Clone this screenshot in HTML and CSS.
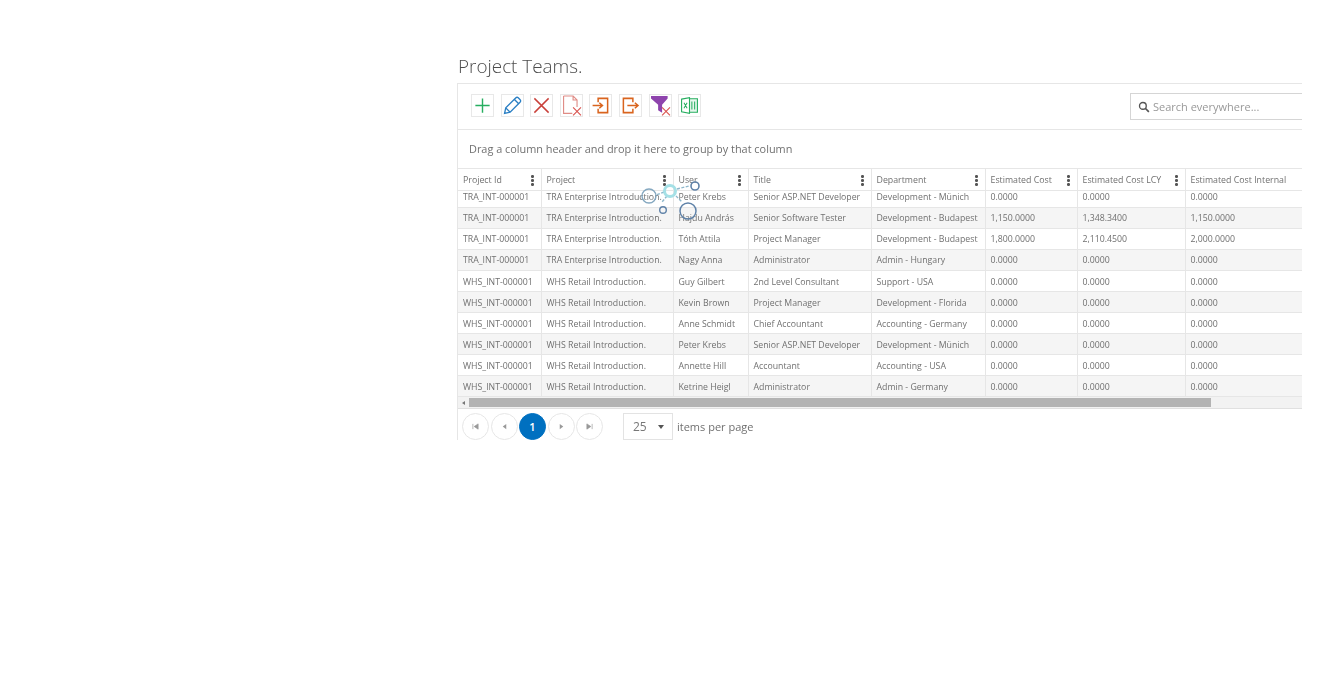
FILE: index.html
```html
<!DOCTYPE html>
<html lang="en">
<head>
<meta charset="utf-8">
<title>Project Teams</title>
<link rel="stylesheet" href="styles.css">
</head>
<body>
<main class="page">
  <h1 class="title">Project Teams.</h1>
  <section class="panel">
    <div class="toolbar">
      <div class="tools">
        <button class="tool"><svg viewBox="0 0 24 24"><path d="M12 3v18M3 12h18" stroke="#27ae60" stroke-width="1.800" fill="none"/></svg></button>
        <button class="tool"><svg viewBox="0 0 24 24"><path d="M2 22l1.500-7L16 2.500c1-1 2.400-1 3.200-.2l2.500 2.500c.8.8.8 2.200-.2 3.200L9 20.500 2 22zM14.500 4.500l5 5M3.500 15L9 20.500" stroke="#2a7fc4" stroke-width="1.700" fill="none"/></svg></button>
        <button class="tool"><svg viewBox="0 0 24 24"><path d="M3 3l18 18M21 3L3 21" stroke="#c9403a" stroke-width="1.800" fill="none"/></svg></button>
        <button class="tool"><svg viewBox="0 0 24 24"><path d="M2 0h12l5 5v9M14 0v5h5M2 0v22h11" stroke="#e08b85" stroke-width="1.400" fill="none"/><path d="M14 14.500l10 10M24 14.500l-10 10" stroke="#d9534f" stroke-width="1.400" fill="none"/></svg></button>
        <button class="tool"><svg viewBox="0 0 24 24"><path d="M9 8V3h12v18H9v-5M2 12h12M10.500 8.500L14.500 12l-4 3.500" stroke="#d9641e" stroke-width="1.900" fill="none"/></svg></button>
        <button class="tool"><svg viewBox="0 0 24 24"><path d="M15 8V3H3v18h12v-5M8 12h13M17.500 8.500L21.500 12l-4 3.500" stroke="#d9641e" stroke-width="1.900" fill="none"/></svg></button>
        <button class="tool"><svg viewBox="0 0 24 24"><path d="M0 0h21v3l-7 8v10l-5-3v-7L0 3z" fill="#8e44ad"/><path d="M14 14.500l10 10M24 14.500l-10 10" stroke="#d9534f" stroke-width="1.400" fill="none"/></svg></button>
        <button class="tool"><svg viewBox="0 0 24 24"><path d="M9 3.500h13v17H9" stroke="#27ae60" stroke-width="1.400" fill="#e8f7ee"/><path d="M2 4l10-2v20L2 20z" stroke="#27ae60" stroke-width="1.400" fill="#fff"/><path d="M5 8.500l4 7M9 8.500l-4 7M15 7v10M18.500 7v10" stroke="#27ae60" stroke-width="1.300" fill="none"/></svg></button>
      </div>
      <label class="search">
        <svg viewBox="0 0 16 16"><circle cx="6.500" cy="6.500" r="4.500" stroke="#555" stroke-width="1.800" fill="none"/><path d="M10 10l4.500 4.500" stroke="#555" stroke-width="2.200"/></svg>
        <span>Search everywhere...</span>
      </label>
    </div>
    <div class="group-bar">Drag a column header and drop it here to group by that column</div>
    <div class="grid-wrap">
      <table class="grid">
        <colgroup>
          <col class="c1"><col class="c2"><col class="c3"><col class="c4"><col class="c5"><col class="c6"><col class="c7"><col class="c8">
        </colgroup>
        <thead>
          <tr>
            <th><span class="hd">Project Id<i class="dots"></i></span></th>
            <th><span class="hd">Project<i class="dots"></i></span></th>
            <th><span class="hd">User<i class="dots"></i></span></th>
            <th><span class="hd">Title<i class="dots"></i></span></th>
            <th><span class="hd">Department<i class="dots"></i></span></th>
            <th><span class="hd">Estimated Cost<i class="dots"></i></span></th>
            <th><span class="hd">Estimated Cost LCY<i class="dots"></i></span></th>
            <th><span class="hd">Estimated Cost Internal</span></th>
          </tr>
        </thead>
        <tbody>
          <tr class="first"><td>TRA_INT-000001</td><td>TRA Enterprise Introduction.</td><td>Peter Krebs</td><td>Senior ASP.NET Developer</td><td>Development - Münich</td><td>0.0000</td><td>0.0000</td><td>0.0000</td></tr>
          <tr class="alt"><td>TRA_INT-000001</td><td>TRA Enterprise Introduction.</td><td>Hajdu András</td><td>Senior Software Tester</td><td>Development - Budapest</td><td>1,150.0000</td><td>1,348.3400</td><td>1,150.0000</td></tr>
          <tr><td>TRA_INT-000001</td><td>TRA Enterprise Introduction.</td><td>Tóth Attila</td><td>Project Manager</td><td>Development - Budapest</td><td>1,800.0000</td><td>2,110.4500</td><td>2,000.0000</td></tr>
          <tr class="alt"><td>TRA_INT-000001</td><td>TRA Enterprise Introduction.</td><td>Nagy Anna</td><td>Administrator</td><td>Admin - Hungary</td><td>0.0000</td><td>0.0000</td><td>0.0000</td></tr>
          <tr><td>WHS_INT-000001</td><td>WHS Retail Introduction.</td><td>Guy Gilbert</td><td>2nd Level Consultant</td><td>Support - USA</td><td>0.0000</td><td>0.0000</td><td>0.0000</td></tr>
          <tr class="alt"><td>WHS_INT-000001</td><td>WHS Retail Introduction.</td><td>Kevin Brown</td><td>Project Manager</td><td>Development - Florida</td><td>0.0000</td><td>0.0000</td><td>0.0000</td></tr>
          <tr><td>WHS_INT-000001</td><td>WHS Retail Introduction.</td><td>Anne Schmidt</td><td>Chief Accountant</td><td>Accounting - Germany</td><td>0.0000</td><td>0.0000</td><td>0.0000</td></tr>
          <tr class="alt"><td>WHS_INT-000001</td><td>WHS Retail Introduction.</td><td>Peter Krebs</td><td>Senior ASP.NET Developer</td><td>Development - Münich</td><td>0.0000</td><td>0.0000</td><td>0.0000</td></tr>
          <tr><td>WHS_INT-000001</td><td>WHS Retail Introduction.</td><td>Annette Hill</td><td>Accountant</td><td>Accounting - USA</td><td>0.0000</td><td>0.0000</td><td>0.0000</td></tr>
          <tr class="alt"><td>WHS_INT-000001</td><td>WHS Retail Introduction.</td><td>Ketrine Heigl</td><td>Administrator</td><td>Admin - Germany</td><td>0.0000</td><td>0.0000</td><td>0.0000</td></tr>
        </tbody>
      </table>
      <svg class="spinner" viewBox="0 0 70 40">
        <g fill="none">
          <path d="M37 8l12-3M24 11l-8 3M27 15l-5 6M36 15l6 6" stroke="#8fb8cc" stroke-width="1.400" stroke-dasharray="3 1.500"/>
          <circle cx="30" cy="10" r="5.500" stroke="#a5e0e6" stroke-width="3"/>
          <circle cx="55" cy="5" r="4" stroke="#5f82a8" stroke-width="1.600"/>
          <circle cx="9" cy="15" r="7" stroke="#85a8c0" stroke-width="1.400"/>
          <circle cx="23" cy="29" r="3.300" stroke="#5f82a8" stroke-width="1.400"/>
          <circle cx="48" cy="30" r="8" stroke="#5f82a8" stroke-width="1.500"/>
        </g>
      </svg>
    </div>
    <div class="scrollbar">
      <span class="arrow"></span>
      <span class="thumb"></span>
    </div>
    <div class="pager">
      <div class="pages">
        <button class="pg"><svg viewBox="0 0 8 8"><path d="M1 1v6M7 1v6L2.500 4z" fill="#999" stroke="#999" stroke-width=".8"/></svg></button>
        <button class="pg"><svg viewBox="0 0 8 8"><path d="M6 1v6L2 4z" fill="#999"/></svg></button>
        <button class="pg current">1</button>
        <button class="pg"><svg viewBox="0 0 8 8"><path d="M2 1v6l4-3z" fill="#999"/></svg></button>
        <button class="pg"><svg viewBox="0 0 8 8"><path d="M7 1v6M1 1v6l4.500-3z" fill="#999" stroke="#999" stroke-width=".8"/></svg></button>
      </div>
      <div class="size">25<i class="caret"></i></div>
      <span class="per">items per page</span>
    </div>
  </section>
</main>
</body>
</html>
```
FILE: styles.css
```css
* { box-sizing: border-box; }
html, body { margin: 0; background: #fff; }
body { font-family: "Open Sans", "Noto Sans", sans-serif; color: #666; }
.page { width: 1302px; padding: 52px 0 0 457px; overflow: hidden; filter: blur(0.35px); }
.title { margin: 0 0 3px; padding-left: 1px; font-size: 18.900px; line-height: 28px; font-weight: 300; color: #4d4d4d; }
.panel { border-top: 1px solid #e6e6e6; border-left: 1px solid #e6e6e6; height: 357px; overflow: hidden; }
.toolbar { height: 46px; border-bottom: 1px solid #e6e6e6; display: flex; align-items: center; justify-content: space-between; padding: 0 0 2px 13px; }
.tools { display: flex; gap: 6.600px; }
.tool { width: 23px; height: 23px; padding: 1px; background: #fff; border: 1px solid #e8e8e8; display: flex; overflow: visible; }
.tool svg { width: 100%; height: 100%; display: block; overflow: visible; }
.search { width: 172px; height: 27px; margin-top: 2px; border: 1px solid #d5d5d5; border-right: 0; display: flex; align-items: center; gap: 3px; padding-left: 7px; font-size: 11px; color: #999; }
.search svg { width: 12px; height: 12px; }
.group-bar { height: 39px; border-bottom: 1px solid #e6e6e6; padding: 0 0 2px 11px; display: flex; align-items: center; font-size: 10.900px; color: #707070; }
.grid-wrap { position: relative; }
.grid { border-collapse: collapse; table-layout: fixed; width: 844px; font-size: 8.750px; }
.c1 { width: 83px; } .c2 { width: 132px; } .c3 { width: 75px; } .c4 { width: 123px; }
.c5 { width: 114px; } .c6 { width: 92px; } .c7 { width: 108px; } .c8 { width: 117px; }
th { height: 21px; padding: 2px 5px 0; font-weight: 400; text-align: left; color: #707070; border-right: 1px solid #e6e6e6; border-bottom: 1px solid #e6e6e6; font-size: 8.800px; }
th:last-child, td:last-child { border-right: 0; }
.hd { display: flex; align-items: center; justify-content: space-between; white-space: nowrap; }
.dots { width: 2.500px; height: 2.500px; margin-right: 2px; border-radius: 50%; background: #555; box-shadow: 0 -4px 0 #555, 0 4px 0 #555; }
td { height: 21.100px; padding: 0 5px; white-space: nowrap; color: #707070; border-right: 1px solid #e6e6e6; border-bottom: 1px solid #e6e6e6; overflow: hidden; }
tbody tr:nth-child(n+5) td { padding-top: 2px; }
.first td { height: 17px; padding-bottom: 4px; line-height: 10px; }
.alt td { background: #f5f5f5; }
.spinner { position: absolute; left: 182px; top: 12px; width: 70px; height: 40px; }
.scrollbar { height: 12px; background: #f2f2f2; border-bottom: 1px solid #e0e0e0; display: flex; align-items: center; }
.arrow { width: 0; height: 0; margin: 0 4px; border: 2px solid transparent; border-right: 3px solid #777; border-left: 0; }
.thumb { width: 742px; height: 9px; background: #b3b3b3; }
.pager { display: flex; align-items: flex-start; height: 36px; padding: 4px 0 0 4px; }
.pages { display: flex; gap: 1.500px; }
.pg { width: 27px; height: 27px; border-radius: 50%; border: 1px solid #e6e6e6; background: #fff; padding: 0; display: flex; align-items: center; justify-content: center; font: 600 11px "Open Sans", sans-serif; }
.pg svg { width: 7px; height: 7px; }
.pg.current { background: #0070c0; border-color: #0070c0; color: #fff; }
.size { width: 50px; height: 27px; margin-left: 20px; border: 1px solid #e3e3e3; font-size: 12px; color: #777; display: flex; align-items: center; justify-content: space-between; padding: 0 8px 0 9px; }
.caret { border: 3.500px solid transparent; border-top: 4px solid #555; border-bottom: 0; }
.per { margin-left: 4px; font-size: 11px; line-height: 27px; color: #707070; }
```
